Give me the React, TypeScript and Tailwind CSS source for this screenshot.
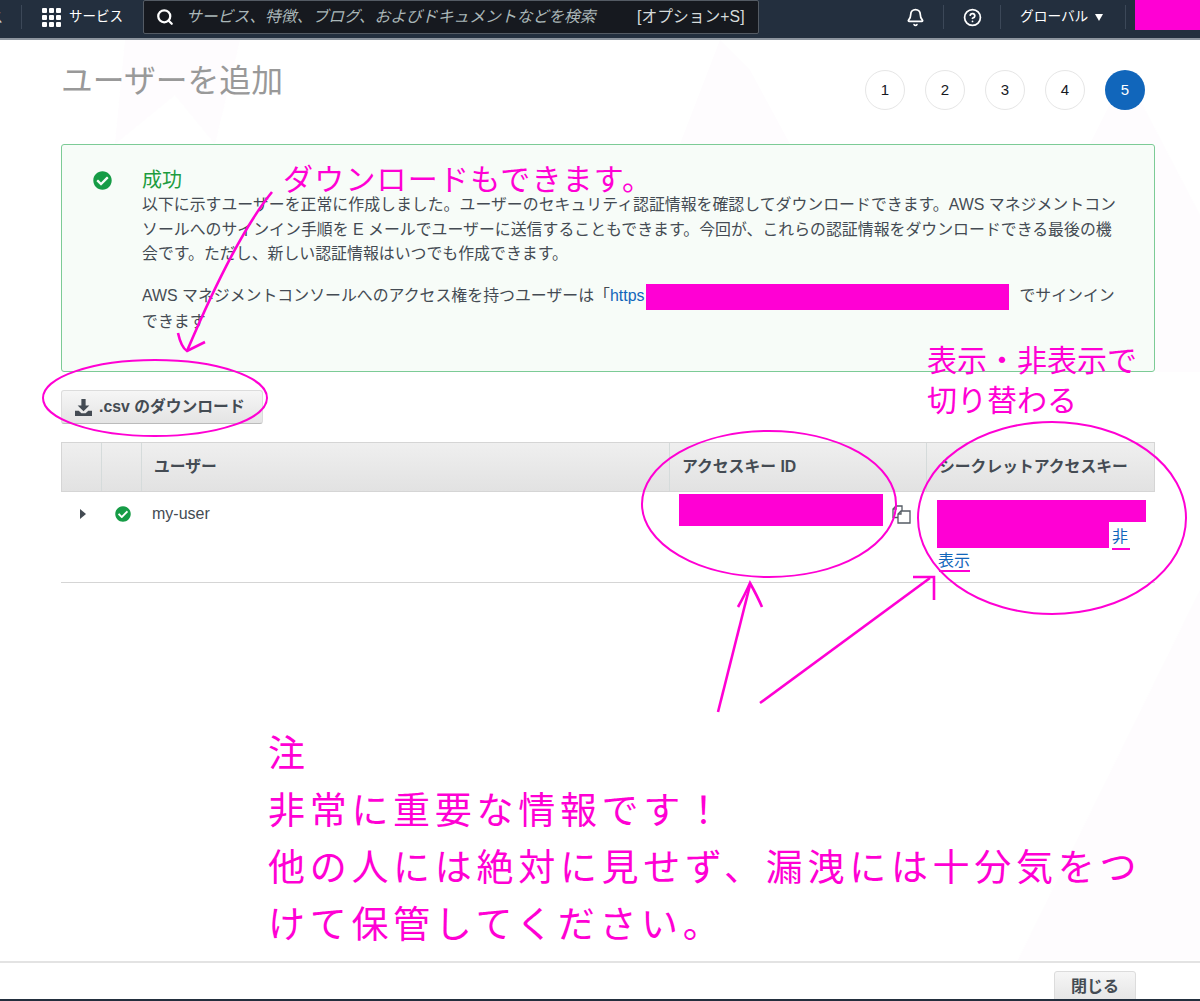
import { Bell, CircleHelp, Search } from "lucide-react";
import { FaCheckCircle } from "react-icons/fa";

const jp = "font-['Liberation_Sans','Noto_Sans_CJK_JP',sans-serif]";

function Steps() {
  return (
    <div className="flex gap-5 mr-[10px]">
      {[1, 2, 3, 4, 5].map((n) => (
        <div
          key={n}
          className={
            n === 5
              ? "w-10 h-10 rounded-full bg-[#1166bb] text-white flex items-center justify-center text-[15px]"
              : "w-10 h-10 rounded-full border border-[#e6e6e6] bg-white text-[#16191f] flex items-center justify-center text-[15px]"
          }
        >
          {n}
        </div>
      ))}
    </div>
  );
}

function GridIcon() {
  return (
    <div className="grid grid-cols-3 gap-[2px] w-[19px]">
      {Array.from({ length: 9 }).map((_, i) => (
        <div key={i} className="w-[5px] h-[5px] bg-white rounded-[1px]" />
      ))}
    </div>
  );
}

function Header() {
  return (
    <div className="h-10 bg-[#232f3e] border-b-2 border-[#8d959e] flex text-white shrink-0">
      <div className="w-[22px] h-6 mt-[5px] border-r border-[#3c4858] overflow-hidden">
        <span className="block -ml-[11px] text-[14px] leading-6 text-[#c5ccd3]">ス</span>
      </div>
      <div className="ml-[20px] flex items-center h-[34px] w-[101px] shrink-0">
        <GridIcon />
        <span className="ml-2 text-[13.5px] whitespace-nowrap">サービス</span>
      </div>
      <div className="w-[616px] h-[34px] bg-[#16191f] border border-[#545b64] rounded-[2px] flex items-center shrink-0">
        <Search className="ml-3 w-[18px] h-[18px]" strokeWidth={3} />
        <span className="ml-[12px] w-[451px] text-[15.8px] italic text-[#aab7b8] whitespace-nowrap">
          サービス、特徴、ブログ、およびドキュメントなどを検索
        </span>
        <span className="text-[15.8px] text-[#d5dbdb] whitespace-nowrap">[オプション+S]</span>
      </div>
      <div className="ml-[147px] flex items-center h-[34px] w-[37px] shrink-0">
        <Bell className="w-[19px] h-[19px]" strokeWidth={2.2} />
      </div>
      <div className="w-px h-6 mt-[5px] bg-[#3c4858]" />
      <div className="flex items-center justify-center h-[34px] w-14 shrink-0">
        <CircleHelp className="w-[19px] h-[19px]" strokeWidth={2.2} />
      </div>
      <div className="w-px h-6 mt-[5px] bg-[#3c4858]" />
      <div className="flex items-center h-[34px] w-[124px] pl-[19px] shrink-0">
        <span className="text-[13.7px] whitespace-nowrap">グローバル</span>
        <span className="ml-[7px] w-0 h-0 border-x-[4.5px] border-x-transparent border-t-[7px] border-t-white" />
      </div>
      <div className="w-px h-6 mt-[5px] bg-[#3c4858]" />
      <div className="ml-[9px] w-[65px] h-[30px] bg-[#ff00d4]" />
    </div>
  );
}

function Alert() {
  return (
    <div className="mt-[34px] h-[228px] border border-[#7ccb96] rounded-[3px] bg-[#f7fcf8] flex">
      <FaCheckCircle className="ml-[31px] mt-[26px] w-[19px] h-[19px] text-[#169c46] shrink-0" />
      <div className="ml-[30px] pt-[22px] text-[15.9px] leading-[24.6px] text-[#444b53]">
        <div className="text-[20px] leading-[26px] text-[#1d9c3f]">成功</div>
        <p className="whitespace-nowrap">
          以下に示すユーザーを正常に作成しました。ユーザーのセキュリティ認証情報を確認してダウンロードできます。AWS マネジメントコン
          <br />
          ソールへのサインイン手順を E メールでユーザーに送信することもできます。今回が、これらの認証情報をダウンロードできる最後の機
          <br />
          会です。ただし、新しい認証情報はいつでも作成できます。
        </p>
        <p className="mt-[17px] whitespace-nowrap">
          AWS マネジメントコンソールへのアクセス権を持つユーザーは「<span className="text-[#1166bb]">https</span>
          <span className="inline-block align-middle ml-[2px] w-[363px] h-[26px] bg-[#ff00d4]" />
          <span className="ml-[10px]">でサインイン</span>
          <br />
          できます
        </p>
      </div>
    </div>
  );
}

function DownloadIcon() {
  return (
    <svg viewBox="0 0 16 16" className="w-[17px] h-[17px]" fill="#444b53">
      <path d="M6 0h4v6h3.500L8 11.500 2.500 6H6z" />
      <path d="M0 11h3.500L6 13.500h4L12.500 11H16v5H0z" />
    </svg>
  );
}

function CopyIcon() {
  return (
    <svg viewBox="0 0 19 19" className="w-[19px] h-[19px]" fill="none" stroke="#545b64" strokeWidth="1.3">
      <path d="M6 12.500H1V4l3-3h6v5" />
      <path d="M4 1v3H1" />
      <path d="M6 18V9l3-3h9v12z" />
      <path d="M9 6v3H6" />
    </svg>
  );
}

function UserTable() {
  const th = "border-r border-[#d5dbdb] flex items-center pl-3 font-bold text-[15.8px] text-[#444b53]";
  return (
    <div className="mt-[18px]">
      <div className="grid grid-cols-[40px_40px_528px_257px_228px] h-[50px] bg-gradient-to-b from-[#efefef] to-[#e2e2e2] border border-[#d5d5d5]">
        <div className={th} />
        <div className={th} />
        <div className={th}>ユーザー</div>
        <div className={th}>アクセスキー ID</div>
        <div className="flex items-center pl-3 font-bold text-[15.8px] text-[#444b53] whitespace-nowrap">シークレットアクセスキー</div>
      </div>
      <div className="grid grid-cols-[40px_40px_528px_257px_228px] h-[91px] border-b border-[#d5d5d5] text-[16px] text-[#444b53]">
        <div className="flex justify-center pt-[17px] pl-[4px]">
          <span className="w-0 h-0 border-y-[5px] border-y-transparent border-l-[6px] border-l-[#444b53]" />
        </div>
        <div className="pt-[14px] pl-[14px]">
          <FaCheckCircle className="w-4 h-4 text-[#169c46]" />
        </div>
        <div className="pt-[10px] pl-[11px]">my-user</div>
        <div className="pt-[2px] pl-[10px] flex">
          <div className="w-[204px] h-8 bg-[#ff00d4]" />
          <div className="ml-[9px] mt-[11px]">
            <CopyIcon />
          </div>
        </div>
        <div className="pt-[8px] pl-[11px] text-[#1166bb]">
          <div className="flex">
            <div className="w-[172px] h-12 bg-[#ff00d4]" />
            <div>
              <div className="w-[37px] h-[22px] bg-[#ff00d4]" />
              <div className="mt-[5px] ml-[3px] leading-[20px]">非</div>
            </div>
          </div>
          <div className="mt-[3px] ml-[1px] leading-[20px]">表示</div>
        </div>
      </div>
    </div>
  );
}

function Annotations() {
  return (
    <>
      <svg className="absolute inset-0 w-[1200px] h-[1001px] pointer-events-none" viewBox="0 0 1200 1001" fill="none" stroke="#ff00d4" strokeWidth="2">
        <ellipse cx="155" cy="398" rx="112" ry="38" />
        <ellipse cx="769" cy="504" rx="127" ry="73" />
        <ellipse cx="1052" cy="518" rx="134" ry="96" />
        <g strokeWidth="2.600">
          <path d="M272 192 C245 225 215 285 187 351" />
          <path d="M178 333 C180 342 182 348 187 351 L205 342" />
          <path d="M718 712 L750 585" />
          <path d="M738 607 C743 598 747 590 750 583 C755 592 759 600 762 607" />
          <path d="M760 703 L930 578" />
          <path d="M913 577 L934 577 L934 600" />
        </g>
        <path d="M1112 549 H1130" />
        <path d="M939 571 H970" />
      </svg>
      <div className={`absolute left-[283px] top-[160px] text-[30px] leading-[40px] tracking-[1.200px] text-[#ff00d4] whitespace-nowrap ${jp}`}>
        ダウンロードもできます。
      </div>
      <div className={`absolute left-[927px] top-[341px] text-[30px] leading-[40px] text-[#ff00d4] whitespace-nowrap ${jp}`}>
        表示・非表示で
        <br />
        切り替わる
      </div>
      <div className={`absolute left-[268px] top-[726px] text-[37px] leading-[57px] tracking-[4.700px] text-[#ff00d4] whitespace-nowrap ${jp}`}>
        注
        <br />
        非常に重要な情報です！
        <br />
        他の人には絶対に見せず、漏洩には十分気をつ
        <br />
        けて保管してください。
      </div>
    </>
  );
}

export default function App() {
  return (
    <div className={`relative isolate w-[1200px] h-[1001px] overflow-hidden bg-white flex flex-col ${jp}`}>
      {/* faint watermark shapes behind the page */}
      <svg className="absolute inset-0 -z-10 w-[1200px] h-[1001px]" viewBox="0 0 1200 1001" fill="#fefcfe">
        <path d="M125 40H240L215 144L175 95L115 144z" />
        <path d="M720 40L750 70L790 144H680z" />
        <path d="M1090 144L1112 100H1140L1200 215V372H1155V144z" />
        <path d="M1018 960L1200 590V960z" />
      </svg>
      <Header />
      <div className="flex-1 pl-[61px] pr-[45px]">
        <div className="flex justify-between items-start pt-[30px] h-[70px]">
          <h1 className="text-[31.8px] leading-[24px] text-[#999] -mt-[1px] whitespace-nowrap">ユーザーを追加</h1>
          <Steps />
        </div>
        <Alert />
        <button className="mt-[18px] w-[202px] h-[34px] rounded-[3px] border border-[#dcdcdc] border-b-[#bbb] bg-gradient-to-b from-[#f6f6f6] to-[#e4e4e4] flex items-center pl-[13px] gap-[7px] text-[15.8px] font-bold text-[#444b53] whitespace-nowrap">
          <DownloadIcon />
          .csv のダウンロード
        </button>
        <UserTable />
      </div>
      <div className="h-10 border-t-2 border-[#e3e3e3] flex justify-end pr-16 pt-2 shrink-0">
        <button className="w-[82px] h-[32px] rounded-t-[3px] border border-[#dcdcdc] bg-gradient-to-b from-[#f6f6f6] to-[#e4e4e4] text-[16px] font-bold text-[#444b53]">
          閉じる
        </button>
      </div>
      <div className="absolute left-0 right-0 bottom-0 h-[2px] bg-[#232f3e]" />
      <Annotations />
    </div>
  );
}
